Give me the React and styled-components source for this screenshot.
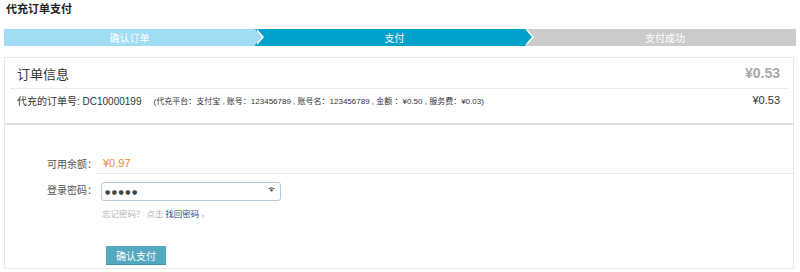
import React from 'react'
import styled, { createGlobalStyle } from 'styled-components'

const GlobalStyle = createGlobalStyle`
  html, body {
    margin: 0;
    padding: 0;
    background: #fff;
  }
  body {
    font-family: "Noto Sans CJK SC", "Noto Sans", sans-serif;
    color: #333;
  }
`;

const Page = styled.div`
  width: 800px;
  height: 272px;
  padding: 0 4px;
  box-sizing: border-box;
  overflow: hidden;
`;

const Title = styled.h1`
  margin: 0;
  padding-left: 2px;
  height: 16px;
  line-height: 16px;
  font-size: 11px;
  font-weight: bold;
  color: #222;
`;

const Steps = styled.div`
  display: flex;
  margin-top: 13px;
  height: 17px;
`;

const stepColors = {
  done: '#a0dcf3',
  active: '#00a2cc',
  todo: '#cbcbcb',
};

const Step = styled.div`
  position: relative;
  flex: ${p => (p.$width ? `0 0 ${p.$width}px` : '1')};
  background: ${p => stepColors[p.$state]};
  color: #fff;
  font-size: 10px;
  line-height: 17px;
  text-align: center;
  padding-left: ${p => (p.$first ? 0 : 9)}px;
  box-sizing: border-box;
  z-index: ${p => p.$z};

  ${p => !p.$last && `
    &::before, &::after {
      content: '';
      position: absolute;
      top: 0;
      border-top: 8.5px solid transparent;
      border-bottom: 8.5px solid transparent;
    }
    &::before {
      right: -9px;
      border-left: 7px solid #fff;
    }
    &::after {
      right: -7px;
      border-left: 7px solid ${stepColors[p.$state]};
    }
  `}
`;

const Card = styled.div`
  margin: 11px 2px 0 0;
  border: 1px solid #e8e8e8;
  height: 212px;
  box-sizing: border-box;
`;

const OrderInfo = styled.div`
  padding: 0 6px;
  border-bottom: 2px solid #dedede;
  height: 67px;
  box-sizing: border-box;
`;

const InfoHead = styled.div`
  display: flex;
  justify-content: space-between;
  align-items: center;
  height: 30px;
  padding: 0 7px 0 6px;
  border-bottom: 1px dotted #d8d8d8;
`;

const InfoTitle = styled.span`
  font-size: 13px;
  color: #333;
`;

const InfoTotal = styled.span`
  font-size: 14px;
  font-weight: bold;
  color: #a8a8a8;
  font-family: "Liberation Sans", "Noto Sans CJK SC", sans-serif;
`;

const InfoRow = styled.div`
  display: flex;
  align-items: center;
  height: 22px;
  padding: 0 7px 0 6px;
  font-family: "Liberation Sans", "Noto Sans CJK SC", sans-serif;
  color: #333;
`;

const OrderNo = styled.span`
  font-size: 10px;
`;

const Detail = styled.span`
  font-size: 8px;
  margin-left: 12px;
  flex: 1;
`;

const RowAmount = styled.span`
  font-size: 11px;
`;

const PayForm = styled.div`
  padding-top: 28px;
  display: grid;
  grid-template-columns: 92px 1fr;
  align-items: center;
  font-size: 10px;
`;

const Label = styled.div`
  text-align: right;
  color: #555;
  height: ${p => p.$h}px;
  line-height: ${p => p.$h}px;
  margin-top: ${p => p.$mt || 0}px;
`;

const Value = styled.div`
  padding-left: ${p => p.$pl || 0}px;
  margin-top: ${p => p.$mt || 0}px;
  height: ${p => p.$h}px;
  line-height: ${p => p.$h}px;
  border-bottom: ${p => (p.$dotted ? '1px dotted #d4d4d4' : 'none')};
`;

const Balance = styled.span`
  color: #f08a1c;
  font-size: 11px;
  font-family: "Liberation Sans", "Noto Sans CJK SC", sans-serif;
`;

const InputWrap = styled.div`
  position: relative;
  width: 180px;
  height: 19px;
`;

const PwdInput = styled.input`
  width: 100%;
  height: 100%;
  box-sizing: border-box;
  border: 1px solid #b7cadc;
  border-radius: 3px;
  padding: 0 0 0 3px;
  font-family: "DejaVu Sans", sans-serif;
  font-size: 6px;
  letter-spacing: 1.5px;
  color: #444;
  outline: 0;
`;

const EyeIcon = styled.svg`
  position: absolute;
  right: 6px;
  top: 7px;
`;

const Hint = styled.div`
  grid-column: 2;
  padding-left: 5px;
  margin-top: 7px;
  line-height: 14px;
  font-size: 8.5px;
  color: #b3b3b3;

  a {
    color: #2b4d8c;
    text-decoration: none;
  }
`;

const SubmitButton = styled.button`
  grid-column: 2;
  justify-self: start;
  margin: 26px 0 0 9px;
  width: 60px;
  height: 19px;
  border: 0;
  border-bottom: 1px solid #3f93aa;
  background: #54a9c1;
  color: #fff;
  font-family: inherit;
  font-size: 10px;
  padding: 0;
  cursor: pointer;
`;

export default function App() {
  return (
    <>
      <GlobalStyle />
      <Page>
        <Title>代充订单支付</Title>
        <Steps>
          <Step $state="done" $width={251} $first $z={3}>确认订单</Step>
          <Step $state="active" $width={270} $z={2}>支付</Step>
          <Step $state="todo" $last $z={1}>支付成功</Step>
        </Steps>
        <Card>
          <OrderInfo>
            <InfoHead>
              <InfoTitle>订单信息</InfoTitle>
              <InfoTotal>¥0.53</InfoTotal>
            </InfoHead>
            <InfoRow>
              <OrderNo>代充的订单号: DC10000199</OrderNo>
              <Detail>(代充平台：支付宝 , 账号：123456789 , 账号名：123456789 , 金额 ：¥0.50 , 服务费：¥0.03)</Detail>
              <RowAmount>¥0.53</RowAmount>
            </InfoRow>
          </OrderInfo>
          <PayForm>
            <Label $h={20}>可用余额：</Label>
            <Value $h={20} $dotted $pl={6}><Balance>¥0.97</Balance></Value>
            <Label $h={19} $mt={6}>登录密码：</Label>
            <Value $h={19} $mt={6} $pl={4}>
              <InputWrap>
                <PwdInput type="text" aria-label="登录密码" defaultValue="●●●●●" readOnly />
                <EyeIcon width="7" height="5" viewBox="0 0 7 5">
                  <path d="M0.5 2.2 Q3.5 -0.5 6.5 2.2" stroke="#555" strokeWidth="1.1" fill="none" />
                  <circle cx="3.5" cy="3.3" r="1.2" fill="#555" />
                </EyeIcon>
              </InputWrap>
            </Value>
            <Hint>忘记密码？ 点击 <a href="#">找回密码</a> 。</Hint>
            <SubmitButton type="button">确认支付</SubmitButton>
          </PayForm>
        </Card>
      </Page>
    </>
  )
}
